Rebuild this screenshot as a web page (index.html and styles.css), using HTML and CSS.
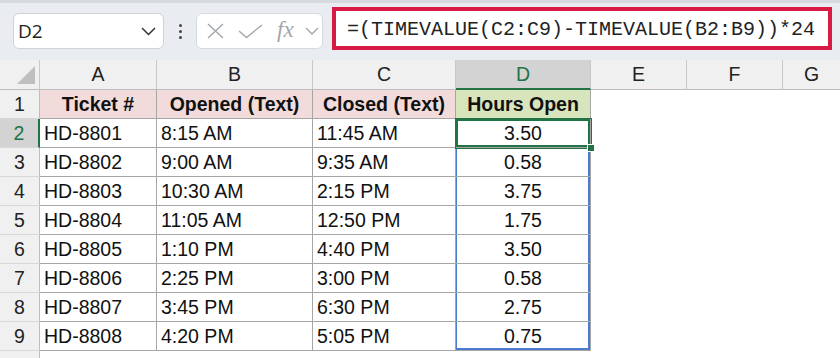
FILE: index.html
```html
<!DOCTYPE html>
<html>
	<head>
		<meta charset="utf-8" />
		<title>Hours Open</title>
		<link rel="stylesheet" href="styles.css">
	</head>
	<body>
		<div class="toolbar">
			<div class="namebox">
				<span>D2</span>
				<svg width="15" height="9" viewBox="0 0 15 9"><polyline points="1,1 7.5,7.5 14,1" fill="none" stroke="#333" stroke-width="1.5"/></svg>
			</div>
			<div class="grip"><i></i><i></i><i></i></div>
			<div class="fnbox">
				<svg width="17" height="16" viewBox="0 0 17 16"><path d="M1 1L16 15M16 1L1 15" stroke="#a3a7ab" stroke-width="1.4" fill="none"/></svg>
				<svg width="25" height="15" viewBox="0 0 25 15"><polyline points="1,7 8.5,13.5 24,1" fill="none" stroke="#a3a7ab" stroke-width="1.4"/></svg>
				<span class="fx">fx</span>
				<svg width="14" height="9" viewBox="0 0 14 9"><polyline points="1,1 7,7 13,1" fill="none" stroke="#a3a7ab" stroke-width="1.4"/></svg>
			</div>
			<div class="formula">=(TIMEVALUE(C2:C9)-TIMEVALUE(B2:B9))*24</div>
		</div>

		<div class="sheet">
			<div class="ch corner"><span class="tri"></span></div>
			<div class="ch">A</div>
			<div class="ch">B</div>
			<div class="ch">C</div>
			<div class="ch on">D</div>
			<div class="ch">E</div>
			<div class="ch">F</div>
			<div class="ch last">G</div>

			<div class="rh">1</div>
			<div class="c hd pink">Ticket #</div>
			<div class="c hd pink">Opened (Text)</div>
			<div class="c hd pink">Closed (Text)</div>
			<div class="c hd green">Hours Open</div>
			<div class="e"></div><div class="e"></div><div class="e"></div>

			<div class="rh on">2</div>
			<div class="c">HD-8801</div>
			<div class="c">8:15 AM</div>
			<div class="c">11:45 AM</div>
			<div class="c num rng active">3.50<span class="handle"></span></div>
			<div class="e"></div><div class="e"></div><div class="e"></div>

			<div class="rh">3</div>
			<div class="c">HD-8802</div>
			<div class="c">9:00 AM</div>
			<div class="c">9:35 AM</div>
			<div class="c num rng">0.58</div>
			<div class="e"></div><div class="e"></div><div class="e"></div>

			<div class="rh">4</div>
			<div class="c">HD-8803</div>
			<div class="c">10:30 AM</div>
			<div class="c">2:15 PM</div>
			<div class="c num rng">3.75</div>
			<div class="e"></div><div class="e"></div><div class="e"></div>

			<div class="rh">5</div>
			<div class="c">HD-8804</div>
			<div class="c">11:05 AM</div>
			<div class="c">12:50 PM</div>
			<div class="c num rng">1.75</div>
			<div class="e"></div><div class="e"></div><div class="e"></div>

			<div class="rh">6</div>
			<div class="c">HD-8805</div>
			<div class="c">1:10 PM</div>
			<div class="c">4:40 PM</div>
			<div class="c num rng">3.50</div>
			<div class="e"></div><div class="e"></div><div class="e"></div>

			<div class="rh">7</div>
			<div class="c">HD-8806</div>
			<div class="c">2:25 PM</div>
			<div class="c">3:00 PM</div>
			<div class="c num rng">0.58</div>
			<div class="e"></div><div class="e"></div><div class="e"></div>

			<div class="rh">8</div>
			<div class="c">HD-8807</div>
			<div class="c">3:45 PM</div>
			<div class="c">6:30 PM</div>
			<div class="c num rng">2.75</div>
			<div class="e"></div><div class="e"></div><div class="e"></div>

			<div class="rh">9</div>
			<div class="c">HD-8808</div>
			<div class="c">4:20 PM</div>
			<div class="c">5:05 PM</div>
			<div class="c num rng end">0.75</div>
			<div class="e"></div><div class="e"></div><div class="e"></div>

			<div class="rh tail"></div>
		</div>
	</body>
</html>
```

FILE: styles.css
```css
*{box-sizing:border-box}
body{margin:0; width:840px; height:358px; overflow:hidden; background:#fff; color:#111; font-family:"Liberation Sans", Arial, sans-serif}

/* formula bar */
.toolbar{
	height:60px;
	background:#e9edf1;
	border-top:3px solid #d6dade;
	display:flex;
	align-items:flex-start;
	padding-left:13px;
}
.namebox{
	width:151px;
	height:36px;
	margin-top:10px;
	background:#fff;
	border:1px solid #cfd3d7;
	border-radius:6px;
	display:flex;
	align-items:center;
	justify-content:space-between;
	padding:0 7px 0 4px;
	font-family:"Open Sans", sans-serif;
	font-size:19px;
	color:#222;
}
.grip{
	width:32px;
	height:36px;
	margin-top:10px;
	display:flex;
	flex-direction:column;
	align-items:center;
	justify-content:center;
	gap:3px;
}
.grip i{display:block; width:3px; height:3px; border-radius:50%; background:#444}
.fnbox{
	width:127px;
	height:36px;
	margin-top:10px;
	background:#fff;
	border:1px solid #d6dade;
	border-radius:6px;
	display:flex;
	align-items:center;
	padding-left:10px;
	gap:14px;
}
.fnbox .fx{
	font-family:"Liberation Serif", serif;
	font-style:italic;
	font-size:23px;
	color:#a3a7ab;
	margin-right:-3px;
	margin-top:-3px;
}
.formula{
	width:500px;
	height:43px;
	margin-top:4px;
	margin-left:9px;
	background:#fff;
	border:4px solid #d81b45;
	padding-left:11px;
	font-family:"Liberation Mono", monospace;
	font-size:20px;
	line-height:37px;
	color:#222;
	white-space:nowrap;
}

/* grid */
.sheet{
	display:grid;
	grid-template-columns:40px 117px 156px 143px 135px 96px 96px 1fr;
	grid-template-rows:30px repeat(9, 29px) 7px;
	font-size:19.5px;
}
.ch{
	background:#f0f0f0;
	border-right:1px solid #c9c9c9;
	border-bottom:1px solid #bdbdbd;
	display:flex;
	align-items:center;
	justify-content:center;
	color:#222;
}
.ch.last{border-right:0}
.ch.on{background:#d3d3d3; color:#217346; border-bottom:2px solid #217346}
.corner{position:relative}
.tri{
	position:absolute;
	right:4px;
	bottom:5px;
	width:0;
	height:0;
	border-left:18px solid transparent;
	border-bottom:18px solid #bfbfbf;
}
.rh{
	background:#f0f0f0;
	border-right:1px solid #bdbdbd;
	border-bottom:1px solid #d8d8d8;
	display:flex;
	align-items:center;
	justify-content:center;
	color:#222;
}
.rh.on{background:#d3d3d3; color:#217346; border-right:2px solid #217346}
.rh.tail{border-bottom:0}
.c{
	border-right:1px solid #a6a6a6;
	border-bottom:1px solid #a6a6a6;
	display:flex;
	align-items:center;
	padding:0 4px;
	white-space:nowrap;
}
.hd{font-weight:bold; justify-content:center}
.pink{background:#f2dcdb}
.green{background:#d8e4bc}
.num{justify-content:center}
.rng{box-shadow:inset 1px 0 #4a7bd0, inset -2px 0 #4a7bd0}
.rng.end{box-shadow:inset 1px 0 #4a7bd0, inset -2px 0 #4a7bd0, inset 0 -2px #4a7bd0}
.active{
	position:relative;
	box-shadow:inset 0 0 0 2px #217346;
	outline:1px solid #217346;
}
.handle{
	position:absolute;
	right:-5px;
	bottom:-5px;
	width:8px;
	height:8px;
	background:#217346;
	border:1px solid #fff;
}
```
